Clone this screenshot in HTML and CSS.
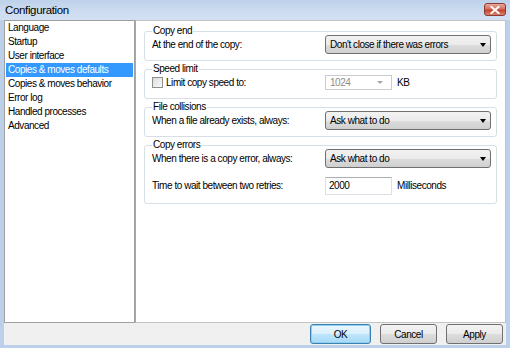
FILE: index.html
```html
<html>
<head>
  <meta http-equiv="Content-Type" content="text/html; charset=UTF-8"/>
  <title>Configuration</title>
  <link rel="stylesheet" href="styles.css">
</head>
<body>
<div class="window">
  <div class="titlebar">
    <span class="title">Configuration</span>
    <span class="close">
      <svg width="10" height="8" viewBox="0 0 10 8"><path d="M1.5 1 L8.5 7 M8.5 1 L1.5 7" stroke="#fff" stroke-width="2" stroke-linecap="square"/></svg>
    </span>
  </div>
  <div class="client">
    <div class="main">
      <ul class="nav">
        <li>Language</li>
        <li>Startup</li>
        <li>User interface</li>
        <li class="active">Copies &amp; moves defaults</li>
        <li>Copies &amp; moves behavior</li>
        <li>Error log</li>
        <li>Handled processes</li>
        <li>Advanced</li>
      </ul>
      <div class="panel">
        <fieldset class="group">
          <legend>Copy end</legend>
          <div class="row">
            <span class="label">At the end of the copy:</span>
            <span class="combo">Don't close if there was errors<i class="arrow"></i></span>
          </div>
        </fieldset>

        <fieldset class="group">
          <legend>Speed limit</legend>
          <div class="row">
            <span class="label"><span class="check"></span>Limit copy speed to:</span>
            <span class="combo disabled">1024<i class="arrow"></i></span>
            <span class="unit">KB</span>
          </div>
        </fieldset>

        <fieldset class="group g3">
          <legend>File collisions</legend>
          <div class="row">
            <span class="label">When a file already exists, always:</span>
            <span class="combo">Ask what to do<i class="arrow"></i></span>
          </div>
        </fieldset>

        <fieldset class="group g4">
          <legend>Copy errors</legend>
          <div class="row">
            <span class="label">When there is a copy error, always:</span>
            <span class="combo">Ask what to do<i class="arrow"></i></span>
          </div>
          <div class="row row2">
            <span class="label">Time to wait between two retries:</span>
            <span class="edit">2000</span>
            <span class="unit">Milliseconds</span>
          </div>
        </fieldset>
      </div>
    </div>
    <div class="footer">
      <span class="button default">OK</span>
      <span class="button">Cancel</span>
      <span class="button">Apply</span>
    </div>
  </div>
</div>
</body>
</html>
```

FILE: styles.css
```css
* {box-sizing: border-box}
body {margin: 0; font: 10px "Liberation Sans", Arial, sans-serif; letter-spacing: -0.45px; color: #000}

.window {width: 510px; height: 348px; display: flex; flex-direction: column; background: #c5d7ee; border-style: solid; border-width: 0 4px 3px 4px; border-color: #c9daef #bcd0e9 #bcd0e9 #bcd0e9}
.titlebar {height: 20px; display: flex; align-items: flex-start; margin: 0 -4px; padding: 0 4px 0 5px; background: linear-gradient(#bdd1ea, #cddcf0 60%, #d2e0f2)}
.title {font-size: 11.5px; letter-spacing: -0.35px; line-height: 20px; color: #000}
.close {margin-left: auto; margin-top: 3px; width: 22px; height: 13px; display: flex; align-items: center; justify-content: center; border: 1px solid #8d3b32; border-radius: 3px; background: linear-gradient(#e6a99e, #d66e5c 45%, #c6402c 55%, #d9836e)}

.client {flex: 1; display: flex; flex-direction: column; background: #f0f0f0}
.main {height: 303px; display: flex}

.nav {width: 131px; margin: 0; padding: 0 1px; list-style: none; background: #fff; border: 1px solid #a0a0a0}
.nav li {line-height: 14px; padding-left: 2px; white-space: nowrap}
.nav li.active {background: #3399ff; color: #fff}

.panel {flex: 1; background: #fff; border: 1px solid #c4c4c4; border-left-color: #a8a8a8; padding: 6px 8px 0 8px}

.group {margin: 0 0 4px 0; padding: 0 5px 6px 7px; border: 1px solid #d5dfe5; border-radius: 3px; min-width: 0}
.group.g3 {margin-top: 4px}
.group legend {padding: 0 1px; line-height: 8px}
.g4 {padding-bottom: 8px}

.row {display: flex; align-items: center; height: 19px}
.row2 {margin-top: 8px}
.label {width: 173px; flex: none; display: flex; align-items: center}
.unit {margin-left: 5px}

.combo {flex: 1; height: 19px; display: flex; align-items: center; padding: 0 3px 0 4px; border: 1px solid #707070; border-radius: 3px; background: linear-gradient(#f2f2f2, #ebebeb 50%, #dddddd 51%, #cfcfcf)}
.arrow {margin-left: auto; margin-right: 1px; width: 0; height: 0; border-style: solid; border-width: 4px 3.5px 0 3.5px; border-color: #000 transparent transparent transparent}
.combo.disabled {flex: none; width: 67px; height: 15px; color: #8d8d8d; border-color: #c9cdd1; border-radius: 0; background: #fff}
.combo.disabled .arrow {border-width: 3px 3px 0 3px; border-top-color: #a6a6a6; margin-right: 5px}

.check {width: 11px; height: 11px; margin-right: 3px; border: 1px solid #8e8f8f; background: linear-gradient(135deg, #dcdcdc, #fbfbfb)}

.edit {width: 67px; height: 18px; display: flex; align-items: center; padding-left: 3px; border: 1px solid #dbdfe6; border-top-color: #abadb3; background: #fff}

.footer {flex: 1; display: flex; align-items: center; justify-content: flex-end; gap: 9px; padding: 0 3px 0 0}
.button {width: 57px; height: 20px; display: flex; align-items: center; justify-content: center; border: 1px solid #707070; border-radius: 3px; background: linear-gradient(#f2f2f2, #ebebeb 50%, #dddddd 51%, #cfcfcf)}
.button.default {width: 61px; border-color: #3c7fb1; background: linear-gradient(#eaf6fd, #d9f0fc 50%, #bee6fd 51%, #a7d9f5); box-shadow: inset 0 0 0 1px #8ed0f0}
```
